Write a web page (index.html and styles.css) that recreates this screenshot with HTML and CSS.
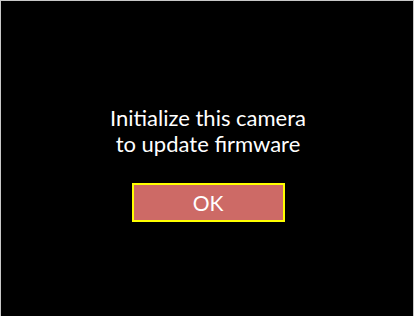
FILE: index.html
```html
<!DOCTYPE html>
<html>
<head>
<meta charset="utf-8">
<link rel="stylesheet" href="styles.css">
</head>
<body>
<div class="screen">
  <p class="message">Initialize this camera<br>to update firmware</p>
  <div class="ok-btn">OK</div>
</div>
</body>
</html>
```
FILE: styles.css
```css
html, body {
  margin: 0;
  padding: 0;
  background: #000;
}
.screen {
  box-sizing: border-box;
  width: 414px;
  height: 316px;
  background: #000;
  border: 1px solid #c8c8c8;
  border-bottom: none;
  display: flex;
  flex-direction: column;
  align-items: center;
  padding-top: 104px;
  padding-left: 2px;
  font-family: Lato, "Open Sans", sans-serif;
  color: #fff;
}
.message {
  margin: 0;
  font-size: 22px;
  line-height: 26px;
  text-align: center;
}
.ok-btn {
  margin-top: 26px;
  box-sizing: border-box;
  width: 153px;
  height: 39px;
  border: 2px solid #ffff00;
  background: #cd6a66;
  display: flex;
  align-items: center;
  justify-content: center;
  font-size: 21px;
  padding-bottom: 1px;
}
```
